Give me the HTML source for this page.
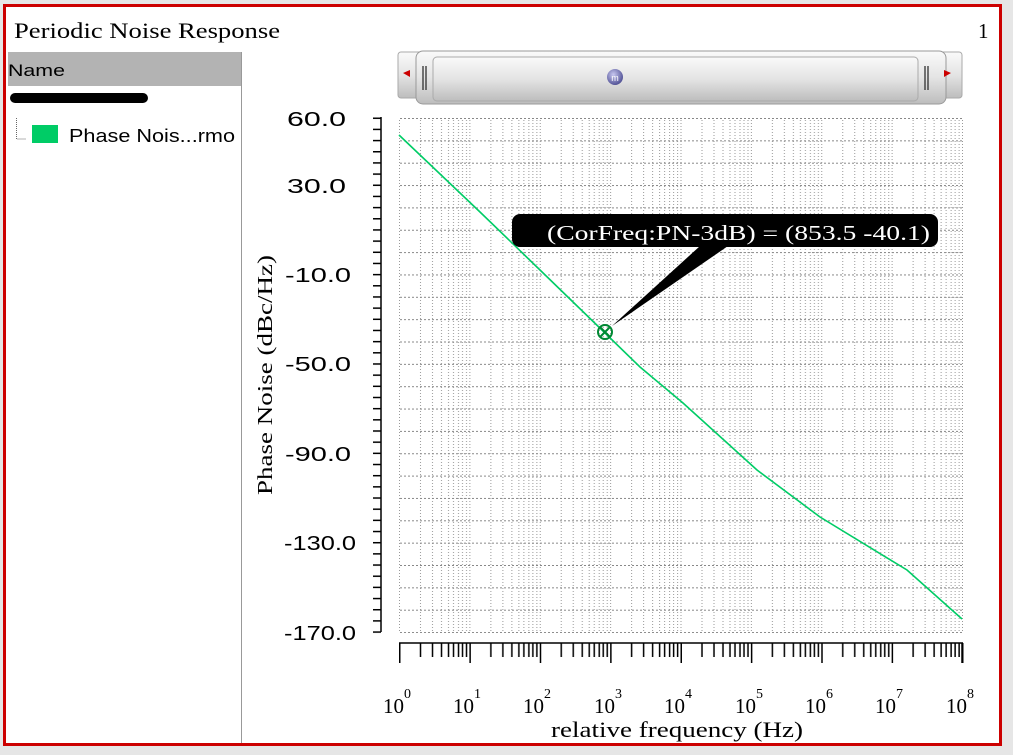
<!DOCTYPE html>
<html><head><meta charset="utf-8"><style>
html,body{margin:0;padding:0;background:#e8e8e8;}
svg{display:block}
</style></head><body>
<svg width="1013" height="755" xmlns="http://www.w3.org/2000/svg">
<defs>
<pattern id="vg" patternUnits="userSpaceOnUse" x="399" y="0" width="70.375" height="755">
<g stroke="#999" stroke-width="1" stroke-dasharray="1 2">
<line x1="0.5" y1="0" x2="0.5" y2="755"/><line x1="21.5" y1="0" x2="21.5" y2="755"/><line x1="33.5" y1="0" x2="33.5" y2="755"/><line x1="42.5" y1="0" x2="42.5" y2="755"/><line x1="49.5" y1="0" x2="49.5" y2="755"/><line x1="54.5" y1="0" x2="54.5" y2="755"/><line x1="59.5" y1="0" x2="59.5" y2="755"/><line x1="63.5" y1="0" x2="63.5" y2="755"/><line x1="67.5" y1="0" x2="67.5" y2="755"/>
</g></pattern>
<pattern id="hg" patternUnits="userSpaceOnUse" x="0" y="118" width="1013" height="22.35">
<line x1="0" y1="0.5" x2="1013" y2="0.5" stroke="#888" stroke-dasharray="2 2"/>
</pattern>
<pattern id="xt" patternUnits="userSpaceOnUse" x="399" y="0" width="70.375" height="755">
<g stroke="#000" stroke-width="1.5">
<line x1="0.75" y1="643" x2="0.75" y2="663"/><line x1="21.5" y1="643" x2="21.5" y2="657"/><line x1="33.5" y1="643" x2="33.5" y2="657"/><line x1="42.5" y1="643" x2="42.5" y2="657"/><line x1="49.5" y1="643" x2="49.5" y2="657"/><line x1="54.5" y1="643" x2="54.5" y2="657"/><line x1="59.5" y1="643" x2="59.5" y2="657"/><line x1="63.5" y1="643" x2="63.5" y2="657"/><line x1="67.5" y1="643" x2="67.5" y2="657"/>
</g></pattern>
<pattern id="yt" patternUnits="userSpaceOnUse" x="0" y="117.5" width="1013" height="11.17">
<line x1="373" y1="0.75" x2="381" y2="0.75" stroke="#000" stroke-width="1.5"/>
</pattern>
<linearGradient id="sb" x1="0" y1="0" x2="0" y2="1">
<stop offset="0" stop-color="#fafafa"/><stop offset="0.5" stop-color="#e4e4e4"/><stop offset="1" stop-color="#bdbdbd"/>
</linearGradient>
<radialGradient id="kn" cx="0.4" cy="0.35" r="0.7"><stop offset="0" stop-color="#c8c8f0"/><stop offset="1" stop-color="#4a4a90"/></radialGradient>
</defs>
<rect x="0" y="0" width="1013" height="755" fill="#e6e6e6"/>
<rect x="4.5" y="5.5" width="996" height="739" fill="#fff" stroke="#cc0000" stroke-width="3"/>
<text x="14" y="38" font-family="Liberation Serif, serif" font-size="22" fill="#000" textLength="266" lengthAdjust="spacingAndGlyphs">Periodic Noise Response</text>
<text x="978" y="38" font-family="Liberation Serif, serif" font-size="21" fill="#000">1</text>
<rect x="8" y="52" width="233" height="691" fill="#fff"/>
<line x1="241.5" y1="52" x2="241.5" y2="743" stroke="#999"/>
<rect x="8" y="52" width="233" height="34" fill="#b3b3b3"/>
<text x="8" y="76" font-family="Liberation Sans, sans-serif" font-size="17" fill="#000" textLength="57" lengthAdjust="spacingAndGlyphs">Name</text>
<rect x="10" y="93" width="138" height="10" rx="5" fill="#000"/>
<path d="M16.5 118 V139 H26" stroke="#666" stroke-dasharray="1 1" fill="none"/>
<rect x="32" y="125" width="26" height="18" fill="#00cc66"/>
<text x="69" y="142" font-family="Liberation Sans, sans-serif" font-size="18" fill="#000" textLength="166" lengthAdjust="spacingAndGlyphs">Phase Nois...rmo</text>
<rect x="398" y="52" width="564" height="46" rx="3" fill="url(#sb)" stroke="#aaa"/>
<rect x="416" y="51" width="530" height="53" rx="7" fill="url(#sb)" stroke="#999"/>
<rect x="433" y="57" width="485" height="44" rx="4" fill="url(#sb)" stroke="#aaa"/>
<path d="M403 73 L410 70 L410 77 Z" fill="#cc0000"/>
<path d="M951 73 L944 70 L944 77 Z" fill="#cc0000"/>
<g stroke="#222" stroke-width="1.2"><line x1="423" y1="66" x2="423" y2="90"/><line x1="426" y1="66" x2="426" y2="90"/><line x1="925" y1="66" x2="925" y2="90"/><line x1="928" y1="66" x2="928" y2="90"/></g>
<circle cx="615" cy="77" r="8" fill="url(#kn)"/>
<text x="615" y="81" text-anchor="middle" font-family="Liberation Sans, sans-serif" font-size="9" fill="#fff">m</text>
<rect x="399" y="118" width="564" height="515" fill="url(#vg)"/>
<rect x="399" y="118" width="564" height="515" fill="url(#hg)"/>
<line x1="381" y1="117" x2="381" y2="632" stroke="#000" stroke-width="1.5"/>
<rect x="372" y="116" width="10" height="518" fill="url(#yt)"/>
<g font-family="Liberation Sans, sans-serif" font-size="20" fill="#000">
<text x="287" y="126" textLength="59" lengthAdjust="spacingAndGlyphs">60.0</text>
<text x="287" y="193" textLength="59" lengthAdjust="spacingAndGlyphs">30.0</text>
<text x="285" y="282" textLength="66" lengthAdjust="spacingAndGlyphs">-10.0</text>
<text x="285" y="371" textLength="66" lengthAdjust="spacingAndGlyphs">-50.0</text>
<text x="285" y="461" textLength="66" lengthAdjust="spacingAndGlyphs">-90.0</text>
<text x="284" y="550" textLength="72" lengthAdjust="spacingAndGlyphs">-130.0</text>
<text x="284" y="640" textLength="72" lengthAdjust="spacingAndGlyphs">-170.0</text>
</g>
<text transform="translate(272,375) rotate(-90)" x="-120" y="0" font-family="Liberation Serif, serif" font-size="21" fill="#000" textLength="240" lengthAdjust="spacingAndGlyphs">Phase Noise (dBc/Hz)</text>
<line x1="399" y1="643" x2="963" y2="643" stroke="#000" stroke-width="1.5"/>
<rect x="398" y="642" width="566" height="22" fill="url(#xt)"/>
<line x1="962" y1="643" x2="962" y2="663" stroke="#000" stroke-width="1.5"/>
<g font-family="Liberation Serif, serif" font-size="21" fill="#000">
<text x="383" y="713">10<tspan font-size="14" dy="-15">0</tspan></text>
<text x="453" y="713">10<tspan font-size="14" dy="-15">1</tspan></text>
<text x="523" y="713">10<tspan font-size="14" dy="-15">2</tspan></text>
<text x="594" y="713">10<tspan font-size="14" dy="-15">3</tspan></text>
<text x="664" y="713">10<tspan font-size="14" dy="-15">4</tspan></text>
<text x="735" y="713">10<tspan font-size="14" dy="-15">5</tspan></text>
<text x="805" y="713">10<tspan font-size="14" dy="-15">6</tspan></text>
<text x="875" y="713">10<tspan font-size="14" dy="-15">7</tspan></text>
<text x="946" y="713">10<tspan font-size="14" dy="-15">8</tspan></text>
<text x="551" y="737" font-size="22" textLength="252" lengthAdjust="spacingAndGlyphs">relative frequency (Hz)</text>
</g>
<polyline points="399,135 480,212 540,270 605,333 640,367 683,403 757,470 820,517 907,570 962,619" fill="none" stroke="#00cc66" stroke-width="1.6"/>
<circle cx="605" cy="332" r="7" fill="none" stroke="#008833" stroke-width="2"/>
<path d="M600 327 L610 337 M610 327 L600 337" stroke="#008833" stroke-width="2"/>
<path d="M612 326 L700 246 L728 246 Z" fill="#000"/>
<rect x="512" y="214" width="426" height="33" rx="8" fill="#000"/>
<text x="547" y="240" font-family="Liberation Serif, serif" font-size="21" fill="#fff" textLength="383" lengthAdjust="spacingAndGlyphs">(CorFreq:PN-3dB) = (853.5 -40.1)</text>
</svg>
</body></html>
